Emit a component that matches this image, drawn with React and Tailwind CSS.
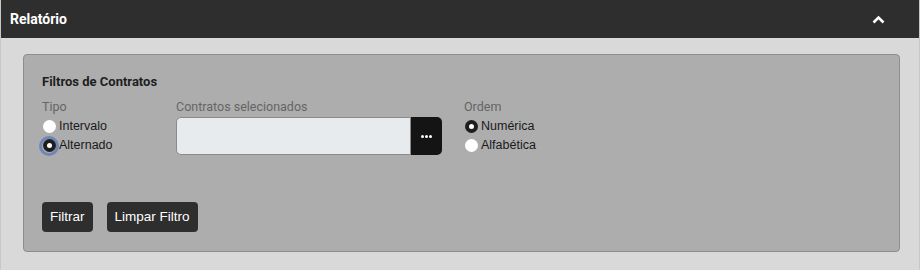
import React from "react";

function Radio({ checked, focus, label }) {
  return (
    <label className="flex items-center h-[19px] gap-[3px] text-[12.5px] text-[#1a1a1a]" style={{ fontFamily: '"Liberation Sans", Arial, sans-serif' }}>
      <span className={"relative flex items-center justify-center w-[14px] h-[14px] rounded-full " + (focus ? "ring-[3px] ring-[#6f86b8]" : "")}>
        {checked ? (
          <span className="w-[13px] h-[13px] rounded-full bg-[#1e1e1e] flex items-center justify-center">
            <span className="w-[5px] h-[5px] rounded-full bg-white" />
          </span>
        ) : (
          <span className="w-[13px] h-[13px] rounded-full bg-white" />
        )}
      </span>
      <span>{label}</span>
    </label>
  );
}

export default function App() {
  return (
    <div className="w-[920px] h-[270px] bg-[#d9d9d9] border-x border-[#c8c8c8]" style={{ fontFamily: 'Roboto, "Liberation Sans", sans-serif' }}>
      <div className="h-[38px] bg-[#2e2e2e] flex items-center justify-between pl-[9px] pr-[34px]">
        <span className="text-white font-bold text-[14px]">Relatório</span>
        <svg width="13" height="9" viewBox="0 0 13 9">
          <path d="M1.5 7.5 L6.5 2.5 L11.5 7.5" fill="none" stroke="#fff" strokeWidth="2.6" />
        </svg>
      </div>
      <div className="pt-[16px] pl-[22px] pr-[19px]">
        <div className="h-[198px] bg-[#adadad] border border-[#8e8e8e] rounded-[4px] pt-[18px] px-[18px]">
          <div className="text-[13px] font-bold text-[#1e1e1e] leading-[18px]">Filtros de Contratos</div>
          <div className="flex mt-[9px]">
            <div className="w-[134px]">
              <div className="text-[12.5px] text-[#656565] leading-[14px] mb-[3px]">Tipo</div>
              <Radio label="Intervalo" />
              <Radio label="Alternado" checked focus />
            </div>
            <div className="w-[266px]">
              <div className="text-[12.5px] text-[#656565] leading-[14px] mb-[3px]">Contratos selecionados</div>
              <div className="flex h-[38px]">
                <div className="flex-1 bg-[#e8ebee] border border-[#8a8a8a] rounded-l-[5px]" />
                <div className="w-[31px] bg-[#141414] rounded-r-[5px] flex items-center justify-center gap-[1px]">
                  <span className="w-[3px] h-[3px] rounded-full bg-white" />
                  <span className="w-[3px] h-[3px] rounded-full bg-white" />
                  <span className="w-[3px] h-[3px] rounded-full bg-white" />
                </div>
              </div>
            </div>
            <div className="ml-[22px]">
              <div className="text-[12.5px] text-[#656565] leading-[14px] mb-[3px]">Ordem</div>
              <Radio label="Numérica" checked />
              <Radio label="Alfabética" />
            </div>
          </div>
          <div className="flex gap-[14px] mt-[47px]" style={{ fontFamily: '"Liberation Sans", Arial, sans-serif' }}>
            <button className="h-[30px] px-[8px] bg-[#2e2e2e] text-white text-[13.5px] rounded-[4px]">Filtrar</button>
            <button className="h-[30px] px-[8px] bg-[#2e2e2e] text-white text-[13.5px] rounded-[4px]">Limpar Filtro</button>
          </div>
        </div>
      </div>
    </div>
  );
}
